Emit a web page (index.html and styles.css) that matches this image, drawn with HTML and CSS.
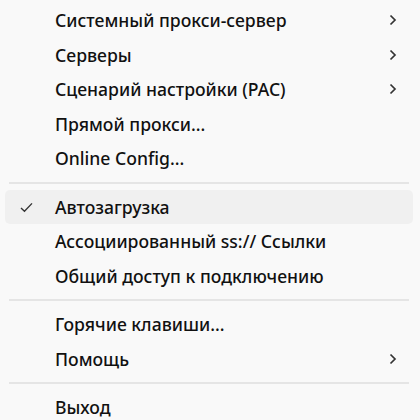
FILE: index.html
```html
<!DOCTYPE html>
<html lang="ru">
<head>
    <meta charset="UTF-8">
    <meta name="viewport" content="width=device-width, initial-scale=1.0">
    <title>Меню</title>
    <link rel="stylesheet" href="styles.css">
</head>
<body>
    <!-- Контекстное меню в трее -->
    <div class="menu">
        <div class="item">
            <span class="label">Системный прокси-сервер</span>
            <svg class="chevron" viewBox="0 0 8 12"><path d="M1.5 1.5 L6 6 L1.5 10.5"/></svg>
        </div>
        <div class="item">
            <span class="label">Серверы</span>
            <svg class="chevron" viewBox="0 0 8 12"><path d="M1.5 1.5 L6 6 L1.5 10.5"/></svg>
        </div>
        <div class="item">
            <span class="label">Сценарий настройки (PAC)</span>
            <svg class="chevron" viewBox="0 0 8 12"><path d="M1.5 1.5 L6 6 L1.5 10.5"/></svg>
        </div>
        <div class="item"><span class="label">Прямой прокси...</span></div>
        <div class="item"><span class="label">Online Config...</span></div>

        <div class="separator"></div>

        <div class="item active">
            <svg class="check" viewBox="0 0 14 12"><path d="M1 6.5 L4.8 10 L13 1.5"/></svg>
            <span class="label">Автозагрузка</span>
        </div>
        <div class="item"><span class="label">Ассоциированный ss:// Ссылки</span></div>
        <div class="item"><span class="label">Общий доступ к подключению</span></div>

        <div class="separator"></div>

        <div class="item"><span class="label">Горячие клавиши...</span></div>
        <div class="item">
            <span class="label">Помощь</span>
            <svg class="chevron" viewBox="0 0 8 12"><path d="M1.5 1.5 L6 6 L1.5 10.5"/></svg>
        </div>

        <div class="separator"></div>

        <div class="item"><span class="label">Выход</span></div>
    </div>
</body>
</html>
```

FILE: styles.css
```css
/* Общие стили */
body {
    margin: 0;
    background: #f9f9f9;
    font-family: 'Noto Sans', 'Open Sans', sans-serif;
    color: #111;
}

/* Меню */
.menu {
    padding: 3px 7px 0 5px;
    display: flex;
    flex-direction: column;
}

.item {
    position: relative;
    display: flex;
    align-items: center;
    height: 34.5px;
    padding-left: 50px;
    padding-right: 16px;
    border-radius: 5px;
    font-size: 17.6px;
    font-weight: 500;
}

.item.active {
    background: #f0f0f0;
}

.label {
    flex: 1;
    white-space: nowrap;
}

.chevron {
    width: 8px;
    height: 12px;
    fill: none;
    stroke: #333;
    stroke-width: 1.7;
}

.check {
    position: absolute;
    left: 15px;
    top: 12px;
    width: 13px;
    height: 11px;
    fill: none;
    stroke: #333;
    stroke-width: 1.5;
}

/* Разделитель */
.separator {
    height: 2px;
    margin: 6px 4px;
    background: #e5e5e5;
}
```
